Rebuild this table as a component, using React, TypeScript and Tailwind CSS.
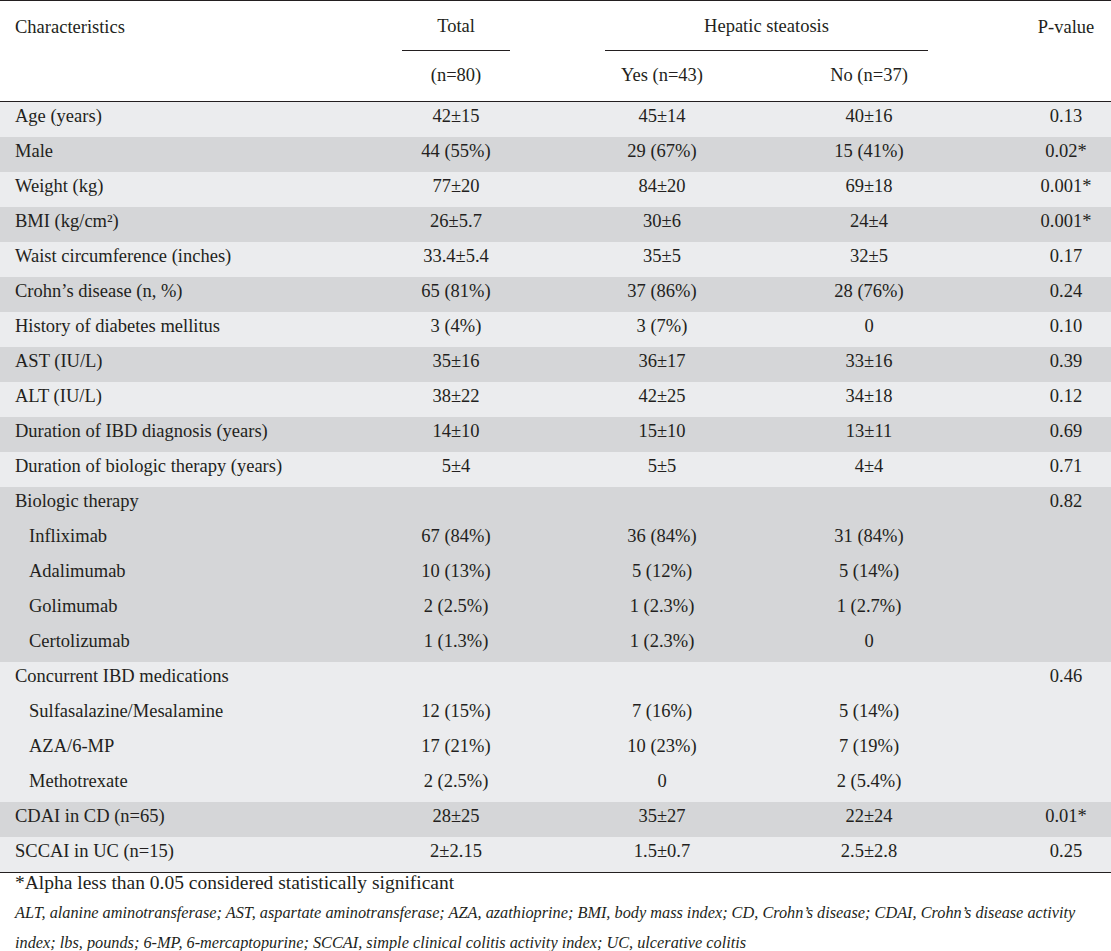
const rows: { label: string; total: string; yes: string; no: string; p: string; sub?: boolean; dark: boolean }[] = [
  { label: "Age (years)", total: "42±15", yes: "45±14", no: "40±16", p: "0.13", dark: false },
  { label: "Male", total: "44 (55%)", yes: "29 (67%)", no: "15 (41%)", p: "0.02*", dark: true },
  { label: "Weight (kg)", total: "77±20", yes: "84±20", no: "69±18", p: "0.001*", dark: false },
  { label: "BMI (kg/cm²)", total: "26±5.7", yes: "30±6", no: "24±4", p: "0.001*", dark: true },
  { label: "Waist circumference (inches)", total: "33.4±5.4", yes: "35±5", no: "32±5", p: "0.17", dark: false },
  { label: "Crohn’s disease (n, %)", total: "65 (81%)", yes: "37 (86%)", no: "28 (76%)", p: "0.24", dark: true },
  { label: "History of diabetes mellitus", total: "3 (4%)", yes: "3 (7%)", no: "0", p: "0.10", dark: false },
  { label: "AST (IU/L)", total: "35±16", yes: "36±17", no: "33±16", p: "0.39", dark: true },
  { label: "ALT (IU/L)", total: "38±22", yes: "42±25", no: "34±18", p: "0.12", dark: false },
  { label: "Duration of IBD diagnosis (years)", total: "14±10", yes: "15±10", no: "13±11", p: "0.69", dark: true },
  { label: "Duration of biologic therapy (years)", total: "5±4", yes: "5±5", no: "4±4", p: "0.71", dark: false },
  { label: "Biologic therapy", total: "", yes: "", no: "", p: "0.82", dark: true },
  { label: "Infliximab", total: "67 (84%)", yes: "36 (84%)", no: "31 (84%)", p: "", sub: true, dark: true },
  { label: "Adalimumab", total: "10 (13%)", yes: "5 (12%)", no: "5 (14%)", p: "", sub: true, dark: true },
  { label: "Golimumab", total: "2 (2.5%)", yes: "1 (2.3%)", no: "1 (2.7%)", p: "", sub: true, dark: true },
  { label: "Certolizumab", total: "1 (1.3%)", yes: "1 (2.3%)", no: "0", p: "", sub: true, dark: true },
  { label: "Concurrent IBD medications", total: "", yes: "", no: "", p: "0.46", dark: false },
  { label: "Sulfasalazine/Mesalamine", total: "12 (15%)", yes: "7 (16%)", no: "5 (14%)", p: "", sub: true, dark: false },
  { label: "AZA/6-MP", total: "17 (21%)", yes: "10 (23%)", no: "7 (19%)", p: "", sub: true, dark: false },
  { label: "Methotrexate", total: "2 (2.5%)", yes: "0", no: "2 (5.4%)", p: "", sub: true, dark: false },
  { label: "CDAI in CD (n=65)", total: "28±25", yes: "35±27", no: "22±24", p: "0.01*", dark: true },
  { label: "SCCAI in UC (n=15)", total: "2±2.15", yes: "1.5±0.7", no: "2.5±2.8", p: "0.25", dark: false },
];

const cols = "grid grid-cols-[350px_212px_200px_214px_135px]";

export default function App() {
  return (
    <div className="w-[1111px] bg-white text-[#231f20] font-['Liberation_Serif',serif] text-[18.5px]">
      {/* header */}
      <div className={`${cols} border-t border-b border-[#231f20]`}>
        <div className="h-[50px] pt-[3px] flex items-center pl-[15px]">Characteristics</div>
        <div className="flex flex-col items-center">
          <div className="h-[50px] pt-[3px] w-[108px] flex items-center justify-center border-b border-[#231f20]">Total</div>
          <div className="h-[50px] flex items-center">(n=80)</div>
        </div>
        <div className="col-span-2 flex flex-col">
          <div className="h-[50px] pt-[3px] w-[323px] ml-[43px] flex items-center justify-center border-b border-[#231f20]">Hepatic steatosis</div>
          <div className="grid grid-cols-[200px_214px] h-[50px] items-center text-center">
            <div>Yes (n=43)</div>
            <div>No (n=37)</div>
          </div>
        </div>
        <div className="h-[50px] pt-[3px] flex items-center justify-center pl-[45px]">P-value</div>
      </div>

      {/* body */}
      <div className="border-b border-[#231f20]">
        {rows.map((r, i) => (
          <div key={i} className={`${cols} h-[35px] pb-[5px] items-center ${r.dark ? "bg-[#d5d6d8]" : "bg-[#ebecee]"}`}>
            <div className={r.sub ? "pl-[29px]" : "pl-[15px]"}>{r.label}</div>
            <div className="text-center">{r.total}</div>
            <div className="text-center">{r.yes}</div>
            <div className="text-center">{r.no}</div>
            <div className="text-center pl-[45px]">{r.p}</div>
          </div>
        ))}
      </div>

      {/* footnotes */}
      <div className="pl-[15px] leading-[30px] -mt-[5px]">
        <p className="text-[19.5px]">*Alpha less than 0.05 considered statistically significant</p>
        <p className="italic whitespace-nowrap text-[16.3px]">
          ALT, alanine aminotransferase; AST, aspartate aminotransferase; AZA, azathioprine; BMI, body mass index; CD, Crohn’s disease; CDAI, Crohn’s disease activity
        </p>
        <p className="italic whitespace-nowrap text-[16.3px]">
          index; lbs, pounds; 6-MP, 6-mercaptopurine; SCCAI, simple clinical colitis activity index; UC, ulcerative colitis
        </p>
      </div>
    </div>
  );
}
